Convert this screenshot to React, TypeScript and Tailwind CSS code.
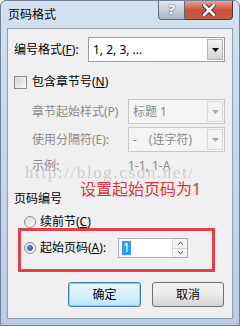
import React from "react";

const F = "font-['Noto_Sans','Noto_Sans_CJK_SC',sans-serif]";

function Arrow({ disabled }: { disabled?: boolean }) {
  return (
    <svg width="7" height="4" viewBox="0 0 7 4">
      <path d="M0 0 L7 0 L3.5 4 Z" fill={disabled ? "#a8a8a8" : "#000"} />
    </svg>
  );
}

function Combo({ value, disabled, w }: { value: string; disabled?: boolean; w: string }) {
  return (
    <div
      className={`${w} h-[25px] flex border ${
        disabled ? "border-[#c7c7c7] bg-[#f4f4f4] text-[#8a8a8a]" : "border-[#9c9c9c] bg-white text-black"
      }`}
    >
      <div className="flex-1 flex items-center pl-[4px] text-[12px] leading-none">{value}</div>
      <div
        className={`w-[16px] my-[1px] mr-[1px] flex items-center justify-center border ${
          disabled
            ? "border-[#d9d9d9] bg-[#f4f4f4]"
            : "border-[#b5b5b5] bg-gradient-to-b from-[#f4f4f4] to-[#d4d4d4]"
        }`}
      >
        <Arrow disabled={disabled} />
      </div>
    </div>
  );
}

function U({ c }: { c: string }) {
  return <span className="underline underline-offset-[1px]">{c}</span>;
}

function Radio({ checked }: { checked?: boolean }) {
  return (
    <div className="w-[12px] h-[12px] rounded-full border border-[#8a8f96] bg-gradient-to-br from-[#d8dbe0] to-[#fbfbfb] flex items-center justify-center">
      {checked && (
        <div className="w-[6px] h-[6px] rounded-full bg-gradient-to-br from-[#7fb6de] to-[#1d4f7d] border border-[#2a5b8a]" />
      )}
    </div>
  );
}

export default function App() {
  return (
    <div className={`${F} w-[240px] h-[326px] relative overflow-hidden rounded-t-[6px] border border-[#6f8299] bg-gradient-to-b from-[#d3e1f0] via-[#c6d7ea] to-[#b9cce2] flex flex-col`}>
      {/* title bar */}
      <div className="h-[27px] flex items-start shrink-0">
        <div className="pl-[7px] pt-[6px] text-[12px] leading-[16px] text-black">页码格式</div>
        <div className="ml-auto mr-[6px] flex">
          <div className="w-[27px] h-[19px] rounded-bl-[4px] border border-t-0 border-[#5a6a7e] bg-gradient-to-b from-[#e3e9f0] via-[#c6cfd9] to-[#a9b7c6] flex items-center justify-center text-[13px] font-bold text-white [text-shadow:0_0_2px_#333]">
            ?
          </div>
          <div className="w-[48px] h-[19px] rounded-br-[4px] border border-l-0 border-t-0 border-[#5a3030] bg-gradient-to-b from-[#e8a493] via-[#c8513d] to-[#c65a45] flex items-center justify-center">
            <svg width="14" height="12" viewBox="0 0 14 12">
              <path d="M2 1 L12 11 M12 1 L2 11" stroke="#3a2a2a" strokeWidth="4.5" strokeLinecap="round" />
              <path d="M2 1 L12 11 M12 1 L2 11" stroke="#fff" strokeWidth="2.6" strokeLinecap="round" />
            </svg>
          </div>
        </div>
      </div>

      {/* client */}
      <div className="relative flex-1 mx-[6px] mb-[6px] border border-[#8d9db2] bg-[#f0f0f0] flex flex-col text-[12px] leading-none text-black">
        {/* row 1 */}
        <div className="mt-[8px] flex items-center">
          <div className="w-[80px] pl-[6px]">
            编号格式(<U c="F" />):
          </div>
          <Combo value="1, 2, 3, ..." w="w-[137px]" />
        </div>

        {/* checkbox */}
        <div className="mt-[12px] h-[16px] flex items-center pl-[6px] gap-[5px]">
          <div className="w-[13px] h-[13px] border border-[#8e8f8f] bg-gradient-to-br from-[#dcdcdc] to-[#fafafa] p-[2px]">
            <div className="w-full h-full bg-gradient-to-br from-[#cfd2d6] to-[#f2f2f2]" />
          </div>
          <span>
            包含章节号(<U c="N" />)
          </span>
        </div>

        {/* combo rows */}
        <div className="mt-[9px] flex items-center text-[#8a8a8a]">
          <div className="w-[120px] pl-[24px]">章节起始样式(P)</div>
          <Combo value="标题 1" disabled w="w-[97px]" />
        </div>
        <div className="mt-[3px] flex items-center text-[#8a8a8a]">
          <div className="w-[120px] pl-[24px]">使用分隔符(E):</div>
          <Combo value="-　(连字符)" disabled w="w-[97px]" />
        </div>
        <div className="mt-[6px] h-[16px] flex items-center text-[#8a8a8a]">
          <div className="w-[120px] pl-[24px]">示例:</div>
          <div>1-1, 1-A</div>
        </div>

        <div className="mt-[17px] h-[16px] flex items-center pl-[6px]">页码编号</div>

        <div className="mt-[8px] h-[13px] flex items-center pl-[16px] gap-[4px]">
          <Radio />
          <span>
            续前节(<U c="C" />)
          </span>
        </div>

        {/* red box */}
        <div className="ml-[10px] w-[197px] h-[44px] border-[3px] border-[#e0414b] flex items-center pl-[3px] pb-[4px]">
          <div className="flex items-center gap-[4px] w-[94px]">
            <Radio checked />
            <span>
              起始页码(<U c="A" />):
            </span>
          </div>
          <div className="w-[70px] h-[20px] border border-[#abadb3] bg-white flex">
            <div className="flex-1 flex items-center pl-[3px]">
              <span className="bg-[#3399ff] text-white px-[1px] leading-[14px]">1</span>
            </div>
            <div className="w-[15px] flex flex-col border-l border-[#d5d5d5] bg-[#f4f4f4]">
              <div className="flex-1 flex items-center justify-center border-b border-[#d5d5d5]">
                <svg width="5" height="3" viewBox="0 0 5 3"><path d="M0 3 L2.5 0 L5 3" fill="none" stroke="#555" strokeWidth="1" /></svg>
              </div>
              <div className="flex-1 flex items-center justify-center">
                <svg width="5" height="3" viewBox="0 0 5 3"><path d="M0 0 L2.5 3 L5 0" fill="none" stroke="#555" strokeWidth="1" /></svg>
              </div>
            </div>
          </div>
        </div>

        {/* buttons */}
        <div className="mt-[10px] flex justify-end pr-[8px] gap-[11px]">
          <div className="w-[73px] h-[25px] rounded-[3px] border border-[#3c7fb1] bg-gradient-to-b from-[#eaf6fd] via-[#d9f0fc] to-[#bee6fd] shadow-[inset_0_0_0_1px_#8ed0f5] flex items-center justify-center">
            确定
          </div>
          <div className="w-[72px] h-[25px] rounded-[3px] border border-[#707070] bg-gradient-to-b from-[#f2f2f2] via-[#ebebeb] to-[#d5d5d5] flex items-center justify-center">
            取消
          </div>
        </div>

        {/* overlays */}
        <div className="absolute left-[17px] top-[135px] font-['Liberation_Serif',serif] text-[17px] leading-[18px] tracking-[1.6px] text-[#b4b4b4]/60 pointer-events-none whitespace-nowrap">
          http://blog.csdn.net/
        </div>
        <div className="absolute left-[72px] top-[151px] text-[16px] leading-[18px] text-[#e0313b] whitespace-nowrap">
          设置起始页码为1
        </div>
      </div>
    </div>
  );
}
